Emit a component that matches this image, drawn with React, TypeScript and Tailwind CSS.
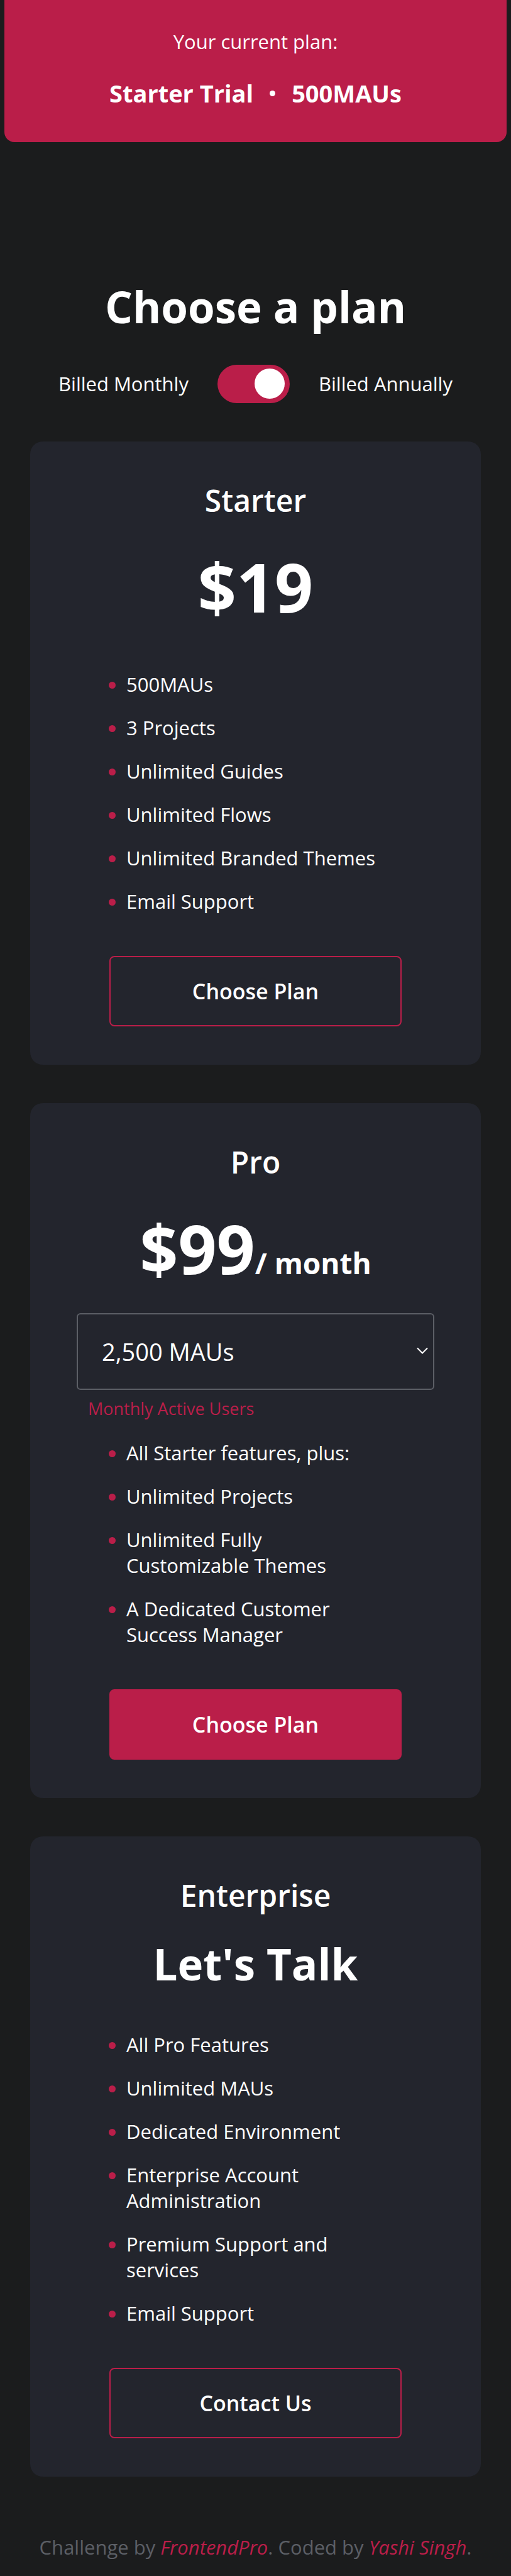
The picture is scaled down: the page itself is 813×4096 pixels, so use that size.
import { useState, type ReactNode } from "react";

const starterFeatures = [
  "500MAUs",
  "3 Projects",
  "Unlimited Guides",
  "Unlimited Flows",
  "Unlimited Branded Themes",
  "Email Support",
];

const proFeatures = [
  "All Starter features, plus:",
  "Unlimited Projects",
  "Unlimited Fully Customizable Themes",
  "A Dedicated Customer Success Manager",
];

const enterpriseFeatures = [
  "All Pro Features",
  "Unlimited MAUs",
  "Dedicated Environment",
  "Enterprise Account Administration",
  "Premium Support and services",
  "Email Support",
];

function Features({ items }: { items: string[] }) {
  return (
    <ul className="flex w-[465px] max-w-full flex-col gap-7 pr-7 text-[31px] leading-[41px]">
      {items.map((item) => (
        <li key={item} className="flex items-start gap-[17px]">
          <span className="mt-4 -ml-px size-[11px] shrink-0 rounded-full bg-[#ba1e49]" />
          <span>{item}</span>
        </li>
      ))}
    </ul>
  );
}

function PlanButton({ children, filled = false }: { children: ReactNode; filled?: boolean }) {
  return (
    <button
      type="button"
      className={
        "mt-[66px] h-28 w-[465px] max-w-full rounded-lg border-2 border-[#ba1e49] text-[34px] leading-[46px] font-semibold " +
        (filled ? "bg-[#ba1e49]" : "bg-transparent")
      }
    >
      {children}
    </button>
  );
}

function Card({ title, children }: { title: string; children: ReactNode }) {
  return (
    <section className="flex flex-col items-center rounded-[20px] bg-[#23252d] px-6 py-[61px]">
      <h2 className="text-[48px] leading-[66px] font-semibold">{title}</h2>
      {children}
    </section>
  );
}

export default function App() {
  const [annual, setAnnual] = useState(true);

  return (
    <div className="min-h-screen bg-[#1b1c1d] font-['Open_Sans',sans-serif] text-white">
      <header className="mx-[7px] flex flex-col items-center gap-[35px] rounded-b-2xl bg-[#ba1e49] pt-[46px] pb-[52px]">
        <p className="text-[31px] leading-[41px]">Your current plan:</p>
        <p className="flex items-center gap-[26px] text-[38px] leading-[52px] font-bold">
          <span>Starter Trial</span>
          <span className="size-[9px] rounded-full bg-white" />
          <span>500MAUs</span>
        </p>
      </header>

      <main className="px-12 pt-[214px]">
        <h1 className="text-center text-[69px] leading-[94px] font-bold">Choose a plan</h1>

        <div className="mt-[46px] flex items-center justify-center gap-[46px] text-[31px] leading-[41px]">
          <span>Billed Monthly</span>
          <label className="relative flex h-[61px] w-[115px] cursor-pointer items-center rounded-full bg-[#ba1e49] px-2 pb-0.5">
            <input
              type="checkbox"
              role="switch"
              aria-label="Billed annually"
              checked={annual}
              onChange={(event) => setAnnual(event.target.checked)}
              className="peer absolute inset-0 cursor-pointer appearance-none rounded-full"
            />
            <span className="pointer-events-none size-12 rounded-full bg-white peer-checked:ml-auto" />
          </label>
          <span>Billed Annually</span>
        </div>

        <div className="mt-[61px] flex flex-col gap-[61px]">
          <Card title="Starter">
            <p className="mt-[31px] mb-[62px] text-[107px] leading-[146px] font-bold">$19</p>
            <Features items={starterFeatures} />
            <PlanButton>Choose Plan</PlanButton>
          </Card>

          <Card title="Pro">
            <p className="mt-[31px] text-[107px] leading-[146px] font-bold">
              $99<span className="text-[46px] leading-none">/ month</span>
            </p>
            <div className="mt-[30px] mb-[31px] flex w-[569px] max-w-full flex-col gap-[11px]">
              <div className="relative">
                <select
                  id="mau"
                  defaultValue="2500"
                  className="block h-[122px] w-full appearance-none rounded-md border-2 border-[#5c5f66] bg-transparent pl-[38px] text-[38px] leading-[52px]"
                >
                  <option value="2500">2,500 MAUs</option>
                </select>
                <svg
                  viewBox="0 0 18 12"
                  className="pointer-events-none absolute top-[54px] right-[10px] h-3 w-[18px]"
                  fill="none"
                  stroke="currentColor"
                  strokeWidth="2"
                >
                  <path d="M1 1.5 9 9.5 17 1.5" />
                </svg>
              </div>
              <label htmlFor="mau" className="pl-[18px] text-[27px] leading-[38px] text-[#ba1e49]">
                Monthly Active Users
              </label>
            </div>
            <Features items={proFeatures} />
            <PlanButton filled>Choose Plan</PlanButton>
          </Card>

          <Card title="Enterprise">
            <p className="mt-7 mb-[62px] text-[69px] leading-[94px] font-bold">Let's Talk</p>
            <Features items={enterpriseFeatures} />
            <PlanButton>Contact Us</PlanButton>
          </Card>
        </div>
      </main>

      <footer className="pt-[92px] pb-6 text-center text-[31px] leading-[41px] text-[#5c5f66]">
        Challenge by{" "}
        <a href="#frontendpro" className="text-[#ba1e49] italic">
          FrontendPro
        </a>
        . Coded by{" "}
        <a href="#yashi-singh" className="text-[#ba1e49] italic">
          Yashi Singh
        </a>
        .
      </footer>
    </div>
  );
}
